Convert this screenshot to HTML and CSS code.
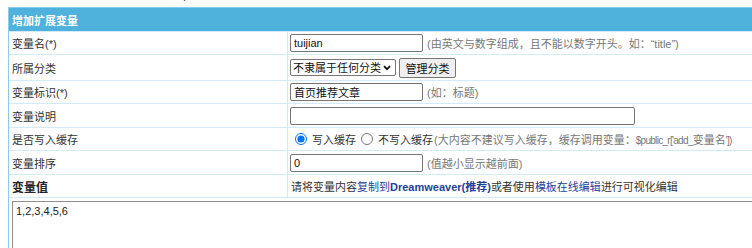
FILE: index.html
```html
<!DOCTYPE html>
<html lang="zh-CN">
<head>
<meta charset="utf-8">
<title>增加扩展变量</title>
<link rel="stylesheet" href="styles.css">
</head>
<body>
<div class="crumb"><span>置：</span><a href="#">扩展变量管理</a> &gt; <span class="dark">增加扩展变量</span> <span>)</span></div>
<div class="form">
  <div class="head">增加扩展变量</div>
  <div class="row r22">
    <div class="label">变量名(*)</div>
    <div class="field"><input class="txt w133" type="text" value="tuijian"><span class="note">(由英文与数字组成，且不能以数字开头。如：“title”)</span></div>
  </div>
  <div class="row r25">
    <div class="label">所属分类</div>
    <div class="field"><span class="selwrap"><select class="sel"><option>不隶属于任何分类</option></select><svg class="chev" width="8" height="6" viewBox="0 0 8 6"><path d="M1 1.2 L4 4.2 L7 1.2" fill="none" stroke="#111" stroke-width="1.8"/></svg></span><button class="btn" type="button">管理分类</button></div>
  </div>
  <div class="row r22">
    <div class="label">变量标识(*)</div>
    <div class="field"><input class="txt w133" type="text" value="首页推荐文章"><span class="note">(如：标题)</span></div>
  </div>
  <div class="row r23">
    <div class="label">变量说明</div>
    <div class="field"><input class="txt w345" type="text" value=""></div>
  </div>
  <div class="row r22">
    <div class="label">是否写入缓存</div>
    <div class="field radios">
      <input class="rad" type="radio" name="cache" checked><span>写入缓存</span>
      <input class="rad" type="radio" name="cache"><span>不写入缓存</span><span class="note">(大内容不建议写入缓存，缓存调用变量：<span class="code">$public_r['add_</span>变量名<span class="code">'])</span></span>
    </div>
  </div>
  <div class="row r23">
    <div class="label">变量排序</div>
    <div class="field"><input class="txt w133" type="text" value="0"><span class="note">(值越小显示越前面)</span></div>
  </div>
  <div class="row r22">
    <div class="label strong">变量值</div>
    <div class="field plain">请将变量内容<a href="#">复制到<b>Dreamweaver(推荐)</b></a>或者使用<a href="#">模板在线编辑</a>进行可视化编辑</div>
  </div>
  <div class="area-row">
    <textarea class="area">1,2,3,4,5,6</textarea>
  </div>
</div>
</body>
</html>
```
FILE: styles.css
```css
html, body {
  margin: 0;
  overflow: hidden;
}
body {
  padding: 0 0 0 8px;
  width: 752px;
  height: 248px;
  box-sizing: border-box;
  font-family: "Liberation Sans", "Noto Sans CJK SC", sans-serif;
  font-size: 11px;
  color: #333;
  background: #fff;
}
a {
  color: #1f3f99;
  text-decoration: none;
}
.crumb {
  height: 16px;
  line-height: 16px;
  margin: -13px 0 4px -8px;
  white-space: nowrap;
  color: #222;
}
.crumb .dark {
  color: #333;
  margin-left: 14px;
}
.form {
  width: 770px;
  border: 1px solid #8ccbea;
  border-right: none;
  border-bottom: none;
}
.head {
  height: 23px;
  background: #4eb2dd;
  color: #fff;
  font-weight: bold;
  padding-left: 3px;
  display: flex;
  align-items: center;
}
.row {
  display: grid;
  grid-template-columns: 279px 1fr;
  border-top: 1px solid #d3ebf8;
}
.r22 { height: 22px; }
.r23 { height: 23px; }
.r25 { height: 25px; }
.label {
  box-sizing: border-box;
  padding-left: 3px;
  border-right: 1px solid #d3ebf8;
  display: flex;
  align-items: center;
}
.label.strong {
  font-weight: bold;
  color: #222;
  font-size: 12px;
}
.field {
  padding-left: 2px;
  display: flex;
  align-items: center;
  white-space: nowrap;
}
.field.plain {
  padding-left: 3px;
}
.field.plain b {
  font-weight: bold;
}
.txt {
  box-sizing: border-box;
  height: 18px;
  margin: 0;
  padding: 0 3px;
  border: 1px solid #767676;
  border-radius: 2px;
  font-family: inherit;
  font-size: 11px;
  color: #111;
  background: #fff;
}
.w133 { width: 133px; }
.w345 { width: 345px; }
.note {
  color: #777;
  margin-left: 4px;
}
.radios .note {
  margin-left: 1px;
}
.code {
  font-size: 10px;
  letter-spacing: -0.7px;
}
.selwrap {
  position: relative;
  display: flex;
}
.sel {
  box-sizing: border-box;
  width: 106px;
  height: 17px;
  margin: 0;
  padding: 0 14px 0 2px;
  border: 1px solid #767676;
  border-radius: 2px;
  font-family: inherit;
  font-size: 11px;
  color: #111;
  background: #fff;
  appearance: none;
  -webkit-appearance: none;
}
.chev {
  position: absolute;
  right: 5px;
  top: 6px;
  pointer-events: none;
}
.btn {
  box-sizing: border-box;
  width: 57px;
  height: 20px;
  margin: 0 0 0 3px;
  padding: 0;
  border: 1px solid #767676;
  border-radius: 2px;
  background: #efefef;
  font-family: inherit;
  font-size: 11px;
  color: #111;
}
.rad {
  width: 12px;
  height: 12px;
  margin: 0 5px 0 5px;
  accent-color: #0075ff;
}
.area-row {
  border-top: 1px solid #d3ebf8;
  padding: 3px 0 0 3px;
}
.area {
  display: block;
  box-sizing: border-box;
  width: 760px;
  height: 100px;
  margin: 0;
  padding: 3px 3px;
  border: 1px solid #8f8f8f;
  font-family: inherit;
  font-size: 11px;
  color: #222;
  resize: none;
}
```
